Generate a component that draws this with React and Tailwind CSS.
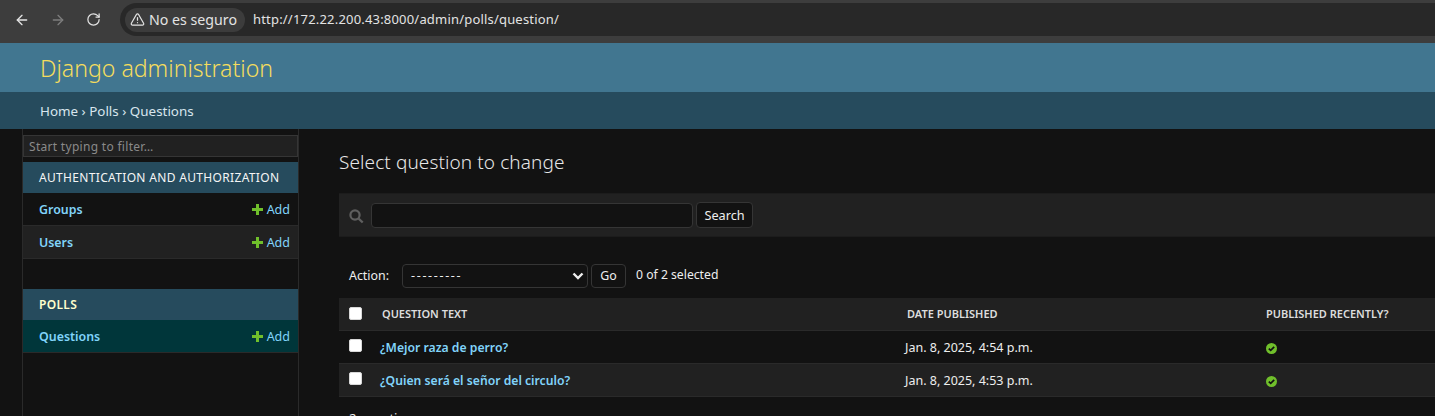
import { ArrowLeft, ArrowRight, RotateCw, TriangleAlert } from 'lucide-react'

const AddLink = () => (
  <span className="flex items-center gap-[4px] text-[12.5px] text-[#81d4fa]">
    <svg width="11" height="11" viewBox="0 0 11 11" className="mt-[-2px]">
      <path d="M4 0h3v4h4v3H7v4H4V7H0V4h4z" fill="#70bf2b" />
    </svg>
    Add
  </span>
)

const ModelRow = ({ name, className }) => (
  <div className={`flex h-[33px] items-center justify-between border-b border-[#2a2a2a] pl-[16px] pr-[8px] pt-[2px] ${className}`}>
    <span className="text-[12.4px] font-semibold text-[#81d4fa]">{name}</span>
    <AddLink />
  </div>
)

const Check = () => (
  <span className="block h-[13px] w-[13px] rounded-[2px] border border-[#d8d8d8] bg-white" />
)

const YesIcon = () => (
  <svg width="11" height="11" viewBox="0 0 11 11">
    <circle cx="5.5" cy="5.5" r="5.5" fill="#70bf2b" />
    <path d="M2.8 5.6l1.9 1.8 3.5-3.6" fill="none" stroke="#121212" strokeWidth="1.7" />
  </svg>
)

const Sidebar = () => (
  <aside className="ml-[22px] h-full w-[277px] shrink-0 border-x border-[#2a2a2a] pt-[6px]">
    <div className="mb-[5px] flex h-[22px] items-center border border-[#353535] bg-[#212121] px-[5px] pt-[2px] text-[12px] tracking-[0.3px] text-[#8a8a8a]">
      Start typing to filter…
    </div>
    <div className="flex h-[31px] items-center bg-[#264b5d] pl-[16px] text-[12px] tracking-[0.33px] text-[#f5f5f5]">
      AUTHENTICATION AND AUTHORIZATION
    </div>
    <ModelRow name="Groups" className="bg-[#121212]" />
    <ModelRow name="Users" className="bg-[#212121]" />
    <div className="h-[30px]" />
    <div className="flex h-[31px] items-center bg-[#264b5d] pl-[16px] text-[12px] font-semibold tracking-[0.3px] text-[#ffffcc]">
      POLLS
    </div>
    <ModelRow name="Questions" className="bg-[#00363a]" />
  </aside>
)

const Row = ({ title, date, className }) => (
  <div className={`flex h-[33px] items-center border-b border-[#2a2a2a] ${className}`}>
    <div className="mb-[3px] flex w-[41px] shrink-0 pl-[10px]"><Check /></div>
    <div className="w-[525px] shrink-0 pt-[2px] text-[12.2px] font-semibold text-[#81d4fa]">{title}</div>
    <div className="w-[361px] shrink-0 pt-[2px] text-[12.5px] text-[#eeeeee]">{date}</div>
    <div className="flex pt-[2px]"><YesIcon /></div>
  </div>
)

export default function App() {
  return (
    <div className="flex h-[416px] w-[1435px] flex-col overflow-hidden bg-[#121212] font-['Noto_Sans',sans-serif]">
      {/* browser toolbar */}
      <div className="flex h-[43px] shrink-0 items-start bg-[#3d3d3d] pt-[3px]">
        <div className="flex h-[33px] w-[120px] shrink-0 items-center pl-[14px] text-[#e3e3e3]">
          <ArrowLeft size={16} strokeWidth={2} />
          <ArrowRight size={16} strokeWidth={2} className="ml-[20px] text-[#7d7d7d]" />
          <RotateCw size={15} strokeWidth={2} className="ml-[20px]" />
        </div>
        <div className="flex h-[33px] flex-1 items-center rounded-l-full bg-[#282828] pl-[5px]">
          <div className="flex h-[24px] w-[120px] shrink-0 items-center gap-[4px] rounded-full bg-[#3c3c3c] pl-[5px] text-[14.2px] text-[#e3e3e3]">
            <TriangleAlert size={15} strokeWidth={2} />
            No es seguro
          </div>
          <span className="ml-[8px] text-[13px] tracking-[0.19px] text-[#e3e3e3]">http://172.22.200.43:8000/admin/polls/question/</span>
        </div>
      </div>

      {/* django header */}
      <div className="flex h-[49px] shrink-0 items-center bg-[#417690] pl-[40px] pt-[2px] text-[23.1px] font-light text-[#f5dd5d]">
        Django administration
      </div>
      <div className="flex h-[37px] shrink-0 items-center bg-[#264b5d] pl-[40px] pt-[2px] text-[13.4px] text-[#d8e6ee]">
        Home › Polls › Questions
      </div>

      <div className="flex min-h-0 flex-1">
        <Sidebar />
        <main className="min-w-0 flex-1 pl-[40px]">
          <h1 className="mt-[20px] text-[19px] leading-[27px] font-light tracking-[0.1px] text-[#e8e8e8]">Select question to change</h1>

          <div className="mt-[17px] flex h-[44px] items-center border-y border-[#1c1c1c] bg-[#212121] pl-[10px]">
            <svg width="15" height="15" viewBox="0 0 15 15" className="mt-[2px]">
              <circle cx="6" cy="6" r="4.6" fill="none" stroke="#5f5f5f" strokeWidth="2.2" />
              <path d="M9.5 9.5l4.2 4" fill="none" stroke="#5f5f5f" strokeWidth="2.4" />
            </svg>
            <div className="ml-[7px] h-[25px] w-[322px] rounded-[4px] border border-[#353535] bg-[#121212]" />
            <div className="ml-[3px] flex h-[26px] w-[57px] items-center justify-center rounded-[4px] border border-[#353535] bg-[#121212] pt-[2px] text-[12.7px] text-[#eeeeee]">Search</div>
          </div>

          <div className="mt-[27px] flex h-[24px] items-center pl-[10px] text-[12.4px] text-[#eeeeee]">
            <span>Action:</span>
            <div className="ml-[13px] flex h-[24px] w-[186px] items-center justify-between rounded-[4px] border border-[#353535] bg-[#121212] pl-[8px] pr-[3px]">
              <span className="tracking-[1.7px]">---------</span>
              <svg width="12" height="8" viewBox="0 0 12 8">
                <path d="M1.5 1.5L6 6l4.5-4.5" fill="none" stroke="#eeeeee" strokeWidth="2.4" />
              </svg>
            </div>
            <div className="ml-[3px] flex h-[24px] w-[35px] items-center justify-center rounded-[4px] border border-[#353535] bg-[#121212]">Go</div>
            <span className="mb-[2px] ml-[10px] text-[12.2px]">0 of 2 selected</span>
          </div>

          <div className="mt-[10px] flex h-[33px] items-center border-b border-[#2a2a2a] bg-[#212121] text-[11px] font-semibold text-[#dddddd]">
            <div className="mb-[2px] flex w-[43px] shrink-0 pl-[10px]"><Check /></div>
            <div className="w-[525px] shrink-0">QUESTION TEXT</div>
            <div className="w-[359px] shrink-0">DATE PUBLISHED</div>
            <div>PUBLISHED RECENTLY?</div>
          </div>
          <Row title="¿Mejor raza de perro?" date="Jan. 8, 2025, 4:54 p.m." className="bg-[#121212]" />
          <Row title="¿Quien será el señor del circulo?" date="Jan. 8, 2025, 4:53 p.m." className="bg-[#212121]" />
          <p className="mt-[12px] pl-[10px] text-[13px] text-[#eeeeee]">2 questions</p>
        </main>
      </div>
    </div>
  )
}
